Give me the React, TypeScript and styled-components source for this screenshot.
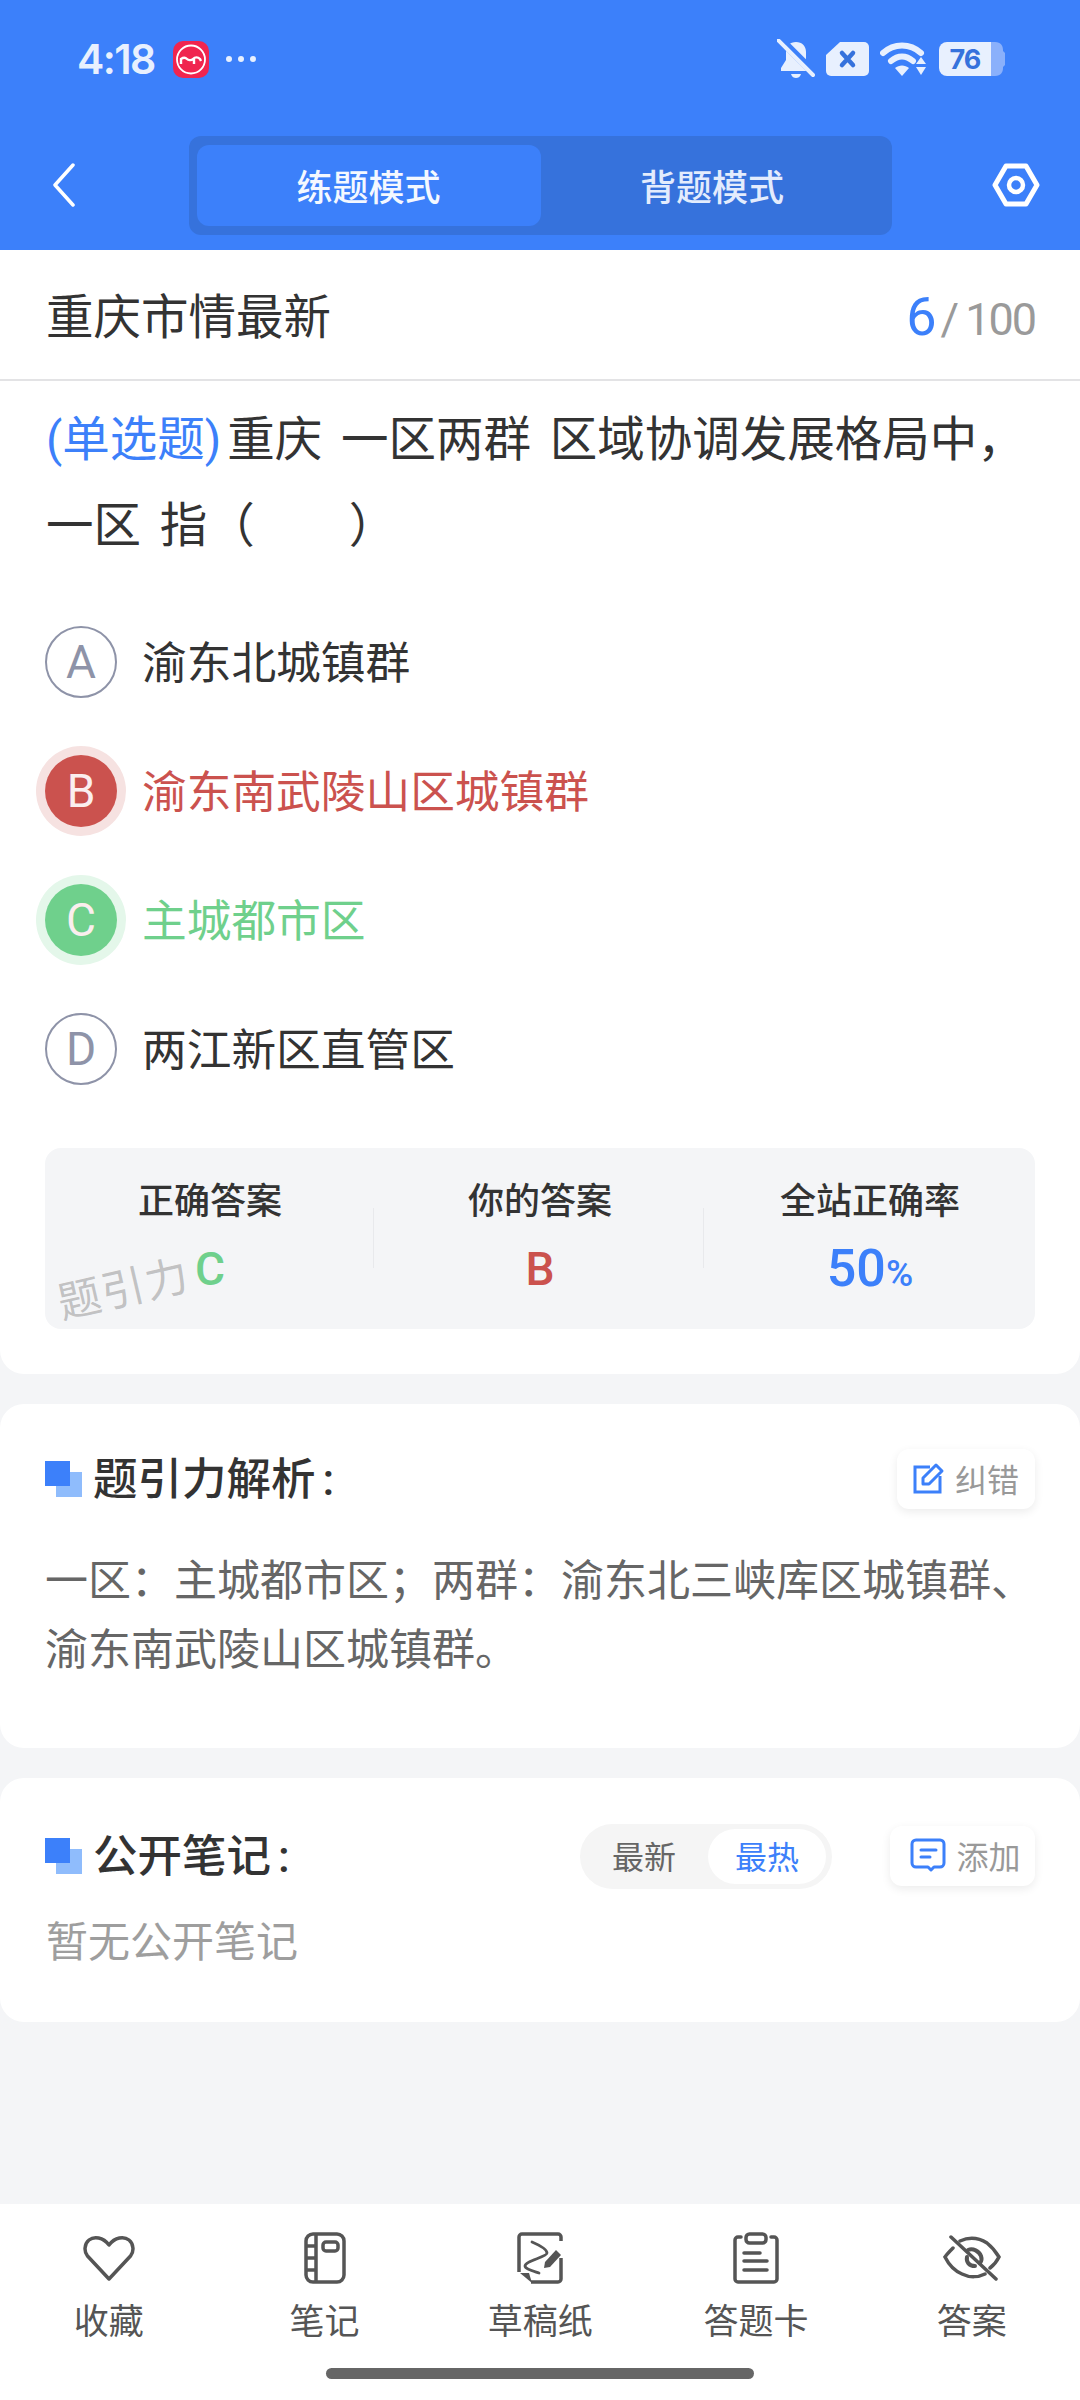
import React from "react";
import styled, { createGlobalStyle } from "styled-components";

const Global = createGlobalStyle`
  html, body { margin: 0; padding: 0; background: #f4f5f7; }
  * { box-sizing: border-box; }
  body { font-family: Roboto, "Noto Sans CJK SC", sans-serif; }
`;

const Page = styled.div`
  width: 1080px; height: 2400px; display: flex; flex-direction: column; background: #f4f5f7; overflow: hidden;
`;
const Header = styled.header`
  background: #3c80fa; height: 250px; display: flex; flex-direction: column;
`;
const StatusBar = styled.div`
  height: 116px; display: flex; align-items: center; justify-content: space-between; padding: 2px 75px 0 77px;
`;
const StatusGroup = styled.div<{ $gap: number }>`
  display: flex; align-items: center; gap: ${p => p.$gap}px;
`;
const Clock = styled.span`
  font-family: Inter, sans-serif; font-size: 41px; font-weight: 600; color: #e8f0fe; letter-spacing: -1.6px; line-height: 1; margin-right: 1px;
`;
const NavBar = styled.nav`
  margin-top: 20px; height: 99px; padding: 0 40px; display: grid; grid-template-columns: 1fr 703px 1fr; align-items: center;
`;
const BackSlot = styled.div`
  padding: 0 0 2px 12px; display: flex;
`;
const SettingsSlot = styled.div`
  display: flex; justify-content: flex-end; padding-bottom: 2px;
`;
const Tabs = styled.div`
  height: 99px; padding: 9px 8px; background: #3672dc; border-radius: 12px; display: grid; grid-template-columns: 344px 1fr;
`;
const Tab = styled.div<{ $active?: boolean }>`
  display: flex; align-items: center; justify-content: center; border-radius: 12px; font-size: 36px; padding-bottom: 2px;
  font-weight: 500; color: ${p => (p.$active ? "#f4f8ff" : "#e3ecfd")}; background: ${p => (p.$active ? "#3c80fa" : "transparent")};
`;
const Card = styled.section<{ $top?: boolean }>`
  background: #fff; border-radius: ${p => (p.$top ? "0 0 24px 24px" : "24px")};
`;
const QuestionCard = styled(Card)`
  height: 1124px;
`;
const TitleRow = styled.div`
  height: 131px; display: flex; align-items: center; justify-content: space-between; padding: 0 45px 0 46px; border-bottom: 2px solid #e3e3e5;
`;
const Title = styled.h1`
  margin: 0; padding-top: 8px; font-size: 47.500px; font-weight: 400; color: #333; line-height: 1;
`;
const Counter = styled.div`
  display: flex; align-items: baseline; color: #9a9a9a; font-size: 45px; font-weight: 400; letter-spacing: -2px; padding-top: 3px;
`;
const CounterNow = styled.span`
  color: #3c80fa; font-size: 54px; margin-right: 6px;
`;
const CounterSlash = styled.span`
  margin-right: 8px;
`;
const Question = styled.div`
  padding: 16px 10px 0 46px; font-size: 47.500px; color: #333;
`;
const QuestionLine = styled.div`
  height: 86px; line-height: 86px; white-space: pre; word-spacing: 7px; display: flex;
`;
const QType = styled.span`
  color: #3c80fa; margin-right: 6px; word-spacing: 0;
`;
const OptionList = styled.ul`
  list-style: none; margin: 28px 0 0; padding: 0 0 0 45px;
`;
const Option = styled.li<{ $color: string }>`
  height: 129px; display: flex; align-items: center; gap: 25px; font-size: 44.700px; color: ${p => p.$color};
`;
const OptionText = styled.span`
  padding-bottom: 5px;
`;
const Badge = styled.span<{ $fill?: string; $halo?: string }>`
  width: 72px; height: 72px; border-radius: 50%; display: flex; align-items: center; justify-content: center;
  font-size: 46px; font-weight: 400; flex: none;
  color: ${p => (p.$fill ? "#fbeeee" : "#8e93a8")};
  background: ${p => p.$fill ?? "transparent"};
  border: ${p => (p.$fill ? "none" : "2px solid #8e93a8")};
  box-shadow: ${p => (p.$halo ? `0 0 0 9px ${p.$halo}` : "none")};
`;
const StatsBox = styled.div`
  position: relative; margin: 35px 45px 0; height: 181px; background: #f4f5f7; border-radius: 16px; display: grid;
  grid-template-columns: repeat(3, 330px);
`;
const Stat = styled.div<{ $divider?: boolean }>`
  position: relative; display: flex; flex-direction: column; align-items: center; padding-top: 34px;
  &::after {
    content: ""; display: ${p => (p.$divider ? "block" : "none")}; position: absolute; right: 1px; top: 60px; height: 60px; width: 1px; background: #e8e9ec;
  }
`;
const StatLabel = styled.div`
  font-size: 36px; font-weight: 500; color: #333; line-height: 40px;
`;
const StatValue = styled.div<{ $color: string }>`
  margin-top: 25px; font-size: 46px; font-weight: 500; line-height: 44px; color: ${p => p.$color};
`;
const PercentValue = styled.span`
  font-size: 52px;
`;
const Percent = styled.span`
  font-size: 37px;
`;
const Watermark = styled.span`
  position: absolute; left: 12px; top: 118px; font-size: 43px; color: rgba(130, 130, 130, 0.45); transform: rotate(-13deg);
  font-weight: 400; letter-spacing: 1.500px; line-height: 1.1;
`;
const Gap = styled.div`
  height: 30px; flex: none;
`;
const AnalysisCard = styled(Card)`
  height: 344px; padding: 45px 30px 0 45px;
`;
const NotesCard = styled(Card)`
  height: 244px; padding: 48px 45px 0 45px;
`;
const SectionHead = styled.div`
  display: flex; align-items: center; justify-content: space-between; height: 60px;
`;
const SectionTitle = styled.h2`
  margin: 0; display: flex; align-items: center; gap: 11px; font-size: 44.500px; font-weight: 500; color: #333; line-height: 1;
`;
const TitleText = styled.span`
  padding-top: 3px;
`;
const Colon = styled.span`
  margin-left: 7px;
`;
const Squares = styled.span`
  position: relative; width: 37px; height: 36px; flex: none;
  &::before { content: ""; position: absolute; left: 11px; top: 11px; width: 26px; height: 25px; background: #8fbcfc; }
  &::after { content: ""; position: absolute; left: 0; top: 0; width: 25px; height: 25px; background: #3c80fa; }
`;
const ChipButton = styled.button<{ $w: number; $pad?: number }>`
  width: ${p => p.$w}px; height: 60px; border: none; background: #fff; border-radius: 12px; box-shadow: 0 3px 10px rgba(0, 0, 0, 0.08);
  display: flex; align-items: center; justify-content: center; gap: 10px; font-family: inherit; font-size: 32px; color: #999; padding: 0 0 3px ${p => p.$pad ?? 0}px;
`;
const AnalysisHeadWrap = styled.div`
  margin-right: 15px;
`;
const AnalysisText = styled.p`
  margin: 38px 0 0; font-size: 43px; line-height: 69px; color: #666; white-space: pre;
`;
const NoteActions = styled.div`
  display: flex; align-items: center; gap: 58px;
`;
const Toggle = styled.div`
  width: 252px; height: 65px; border-radius: 33px; background: #f5f5f5; padding: 5px 6px 5px 0; display: grid; grid-template-columns: 128px 118px;
`;
const ToggleItem = styled.div<{ $active?: boolean }>`
  display: flex; align-items: center; justify-content: center; font-size: 32px; border-radius: 28px; padding-bottom: 3px;
  color: ${p => (p.$active ? "#3c80fa" : "#666")}; background: ${p => (p.$active ? "#fff" : "transparent")};
`;
const Empty = styled.p`
  margin: 32px 0 0 1px; font-size: 42px; line-height: 50px; color: #9e9e9e;
`;
const Spacer = styled.div`
  flex: 1;
`;
const BottomBar = styled.footer`
  height: 196px; background: #fff; position: relative; padding: 0 0 0 1px; display: grid; grid-template-columns: repeat(5, 215.750px);
`;
const BarItem = styled.div`
  display: flex; flex-direction: column; align-items: center; padding-top: 24px; color: #555; font-size: 35px;
`;
const IconBox = styled.div`
  height: 60px; display: flex; align-items: center; justify-content: center;
`;
const BarLabel = styled.div`
  margin-top: 11px; line-height: 48px;
`;
const HomeBar = styled.div`
  position: absolute; left: 326px; top: 164px; width: 428px; height: 11px; border-radius: 6px; background: #666;
`;

const BellOff = () => (
  <svg width="38" height="40" viewBox="0 0 38 40" fill="none">
    <path d="M19 3c6 0 10 4 10 10v8l5 8v3H4v-3l5-8v-8c0-6 4-10 10-10z" fill="#e8f0fe" />
    <path d="M14 35h10c-1 3-3 4-5 4s-4-1-5-4z" fill="#e8f0fe" />
    <path d="M2 -1 39 36" stroke="#3c80fa" strokeWidth="8" />
    <path d="M1 1l35 35" stroke="#e8f0fe" strokeWidth="4" strokeLinecap="round" />
  </svg>
);
const XTag = () => (
  <svg width="43" height="34" viewBox="0 0 43 34">
    <path d="M14 0h24a5 5 0 0 1 5 5v24a5 5 0 0 1-5 5H5a5 5 0 0 1-5-5V13z" fill="#e8f0fe" />
    <path d="M16 11l11 12M27 11L16 23" stroke="#3672dc" strokeWidth="4.500" strokeLinecap="round" />
  </svg>
);
const Wifi = () => (
  <svg width="48" height="34" viewBox="0 0 48 34" fill="none">
    <path d="M3 11C14 1 30 1 41 11" stroke="#e8f0fe" strokeWidth="6" strokeLinecap="round" />
    <path d="M11 19c7-6 15-6 22 0" stroke="#e8f0fe" strokeWidth="6" strokeLinecap="round" />
    <path d="M15 26c4-3.500 10-3.500 14 0l-7 8z" fill="#e8f0fe" />
    <path d="M41 15l5 7H36zM36 25h10l-5 8z" fill="#e8f0fe" />
  </svg>
);
const Battery = () => (
  <svg width="66" height="34" viewBox="0 0 66 34">
    <path d="M50 0h6c6 0 8 4 8 8v1l2 2v12l-2 2v1c0 4-2 8-8 8h-6z" fill="#8ab0fb" />
    <path d="M8 0h44v34H8a8 8 0 0 1-8-8V8a8 8 0 0 1 8-8z" fill="#e8f0fe" />
    <text x="26" y="27" textAnchor="middle" fontFamily="Inter, sans-serif" fontWeight="700" fontSize="27" fill="#3672dc" letterSpacing="-1">76</text>
  </svg>
);
const AppBadge = () => (
  <svg width="36" height="37" viewBox="0 0 36 37" fill="none">
    <rect width="36" height="37" rx="10" fill="#f0254f" />
    <circle cx="18" cy="18.500" r="14" stroke="#fff" strokeWidth="1.800" />
    <path d="M8 23v-5c3-2 5-1 6 0s4 2 6 0 5-2 7 0l1 2M21 18v5" stroke="#fff" strokeWidth="2.400" />
  </svg>
);
const Dots = () => (
  <svg width="30" height="8" viewBox="0 0 30 8" fill="#e8f0fe">
    <circle cx="3" cy="4" r="3" /><circle cx="15" cy="4" r="3" /><circle cx="27" cy="4" r="3" />
  </svg>
);
const Back = () => (
  <svg width="24" height="44" viewBox="0 0 24 44" fill="none">
    <path d="M21 2 3 22l18 20" stroke="#fff" strokeWidth="3.500" strokeLinecap="round" strokeLinejoin="round" />
  </svg>
);
const Settings = () => (
  <svg width="48" height="44" viewBox="0 0 48 44" fill="none">
    <path d="M14 3h20l11 19-11 19H14L3 22z" stroke="#fff" strokeWidth="5" strokeLinejoin="round" />
    <circle cx="24" cy="22" r="7" stroke="#fff" strokeWidth="4.500" />
  </svg>
);
const EditIcon = () => (
  <svg width="32" height="32" viewBox="0 0 32 32" fill="none" stroke="#3c80fa" strokeWidth="3">
    <path d="M17 5H2v25h25V14" />
    <path d="M10 22v-6L23 3l6 6-13 13z" strokeLinejoin="round" />
  </svg>
);
const CommentIcon = () => (
  <svg width="36" height="34" viewBox="0 0 36 34" fill="none" stroke="#3c80fa" strokeWidth="3">
    <path d="M6 2h24a4 4 0 0 1 4 4v19a4 4 0 0 1-4 4h-6l-3 3-3-3H6a4 4 0 0 1-4-4V6a4 4 0 0 1 4-4z" strokeLinejoin="round" />
    <path d="M11 12h15M11 19h9" strokeLinecap="round" />
  </svg>
);
const Heart = () => (
  <svg width="52" height="46" viewBox="0 0 52 46" fill="none" stroke="#555" strokeWidth="3.500" strokeLinejoin="round">
    <path d="M26 44 4.500 21C1 17 1 9 6 5c5-4 14-3 20 5 6-8 15-9 20-5 5 4 5 12 1.500 16z" />
  </svg>
);
const Notebook = () => (
  <svg width="42" height="52" viewBox="0 0 42 52" fill="none" stroke="#555" strokeWidth="3.500">
    <rect x="2" y="2" width="38" height="48" rx="7" />
    <path d="M12 2v48M2 14h10M2 26h10M2 38h10" />
    <rect x="19" y="10" width="15" height="9" rx="3" />
  </svg>
);
const Draft = () => (
  <svg width="46" height="52" viewBox="0 0 46 52" fill="none" stroke="#555" strokeWidth="3.500">
    <path d="M44 9V5a3 3 0 0 0-3-3H5a3 3 0 0 0-3 3v35" />
    <path d="M14 50h27a3 3 0 0 0 3-3V26" />
    <path d="M15 10C22 13 30 17 30 21 30 25 8 29 8 34 8 37 16 39 22 41" strokeLinecap="round" strokeWidth="2.800" />
    <path d="M27 36l1-6 11-12 5 5-11 12z" fill="#555" stroke="none" />
    <path d="M3 41h9l3 10z" fill="#555" stroke="none" />
  </svg>
);
const Clipboard = () => (
  <svg width="46" height="52" viewBox="0 0 46 52" fill="none" stroke="#555" strokeWidth="3.500" strokeLinecap="round">
    <path d="M8 5H5a3 3 0 0 0-3 3v39a3 3 0 0 0 3 3h36a3 3 0 0 0 3-3V8a3 3 0 0 0-3-3h-3" />
    <rect x="13" y="2" width="20" height="9" rx="3.500" />
    <path d="M11 21h16M11 29h23M11 38h23" />
  </svg>
);
const EyeOff = () => (
  <svg width="58" height="46" viewBox="0 0 58 46" fill="none" stroke="#555" strokeWidth="3.500" strokeLinecap="round">
    <path d="M17 6C26 2 36 3 44 8 49 12 53 17 56 22 54 26 51 30 47 33" />
    <path d="M10 13C7 16 4 19 2 22 6 30 12 36 19 39 27 43 36 42 42 39" />
    <path d="M8 2 53 44" />
    <path d="M25 15C30 13 36 16 38 21 39 24 38 27 37 28" strokeWidth="4" />
    <path d="M24 22C23 27 26 31 32 31" strokeWidth="4" />
  </svg>
);

const options = [
  { key: "A", text: "渝东北城镇群", color: "#333" },
  { key: "B", text: "渝东南武陵山区城镇群", color: "#cb524e", fill: "#cb524e", halo: "#f6e2e1" },
  { key: "C", text: "主城都市区", color: "#6fd08c", fill: "#6fd08c", halo: "#e4f7ea" },
  { key: "D", text: "两江新区直管区", color: "#333" },
];

const barItems = [
  { label: "收藏", icon: <Heart /> },
  { label: "笔记", icon: <Notebook /> },
  { label: "草稿纸", icon: <Draft /> },
  { label: "答题卡", icon: <Clipboard /> },
  { label: "答案", icon: <EyeOff /> },
];

export default function App() {
  return (
    <Page>
      <Global />
      <Header>
        <StatusBar>
          <StatusGroup $gap={17}>
            <Clock>4:18</Clock>
            <AppBadge />
            <Dots />
          </StatusGroup>
          <StatusGroup $gap={11}>
            <BellOff />
            <XTag />
            <Wifi />
            <Battery />
          </StatusGroup>
        </StatusBar>
        <NavBar>
          <BackSlot><Back /></BackSlot>
          <Tabs>
            <Tab $active>练题模式</Tab>
            <Tab>背题模式</Tab>
          </Tabs>
          <SettingsSlot><Settings /></SettingsSlot>
        </NavBar>
      </Header>
      <QuestionCard $top>
        <TitleRow>
          <Title>重庆市情最新</Title>
          <Counter>
            <CounterNow>6</CounterNow>
            <CounterSlash>/</CounterSlash>100
          </Counter>
        </TitleRow>
        <Question>
          <QuestionLine>
            <QType>(单选题)</QType>
            <span>重庆 一区两群 区域协调发展格局中，</span>
          </QuestionLine>
          <QuestionLine>{"一区 指（     ）"}</QuestionLine>
        </Question>
        <OptionList>
          {options.map(o => (
            <Option key={o.key} $color={o.color}>
              <Badge $fill={o.fill} $halo={o.halo}>{o.key}</Badge>
              <OptionText>{o.text}</OptionText>
            </Option>
          ))}
        </OptionList>
        <StatsBox>
          <Stat $divider>
            <StatLabel>正确答案</StatLabel>
            <StatValue $color="#6fd08c">C</StatValue>
          </Stat>
          <Stat $divider>
            <StatLabel>你的答案</StatLabel>
            <StatValue $color="#cb524e">B</StatValue>
          </Stat>
          <Stat>
            <StatLabel>全站正确率</StatLabel>
            <StatValue $color="#3c80fa"><PercentValue>50</PercentValue><Percent>%</Percent></StatValue>
          </Stat>
          <Watermark>题引力</Watermark>
        </StatsBox>
      </QuestionCard>
      <Gap />
      <AnalysisCard>
        <AnalysisHeadWrap>
          <SectionHead>
            <SectionTitle><Squares /><TitleText>题引力解析<Colon>:</Colon></TitleText></SectionTitle>
            <ChipButton $w={138}><EditIcon />纠错</ChipButton>
          </SectionHead>
        </AnalysisHeadWrap>
        <AnalysisText>{"一区：主城都市区；两群：渝东北三峡库区城镇群、\n渝东南武陵山区城镇群。"}</AnalysisText>
      </AnalysisCard>
      <Gap />
      <NotesCard>
        <SectionHead>
          <SectionTitle><Squares /><TitleText>公开笔记<Colon>:</Colon></TitleText></SectionTitle>
          <NoteActions>
            <Toggle>
              <ToggleItem>最新</ToggleItem>
              <ToggleItem $active>最热</ToggleItem>
            </Toggle>
            <ChipButton $w={145} $pad={6}><CommentIcon />添加</ChipButton>
          </NoteActions>
        </SectionHead>
        <Empty>暂无公开笔记</Empty>
      </NotesCard>
      <Spacer />
      <BottomBar>
        {barItems.map(b => (
          <BarItem key={b.label}>
            <IconBox>{b.icon}</IconBox>
            <BarLabel>{b.label}</BarLabel>
          </BarItem>
        ))}
        <HomeBar />
      </BottomBar>
    </Page>
  );
}
